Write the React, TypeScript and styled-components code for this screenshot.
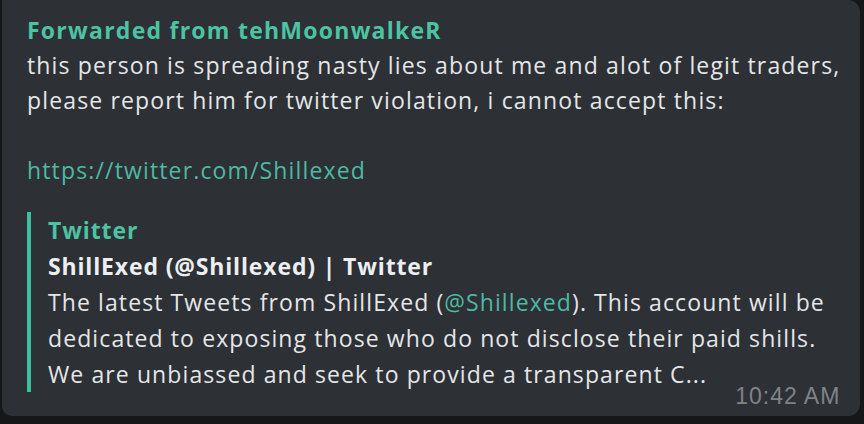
import React from 'react';
import styled, { createGlobalStyle } from 'styled-components';

const GlobalStyle = createGlobalStyle`
  html, body {
    margin: 0;
    padding: 0;
    background: #161719;
  }
  body {
    font-family: 'Open Sans', 'Noto Sans', sans-serif;
  }
`;

const Page = styled.div`
  width: 864px;
  height: 424px;
  box-sizing: border-box;
  padding: 0 6px 8px 2px;
  display: flex;
`;

const Bubble = styled.div`
  flex: 1;
  box-sizing: border-box;
  background: #2d3035;
  border-radius: 0 12px 12px 10px;
  padding: 13px 20px 0 25px;
  color: #e4e6e8;
  font-size: 23px;
  letter-spacing: 1.15px;
  line-height: 35px;
  white-space: nowrap;
`;

const Header = styled.div`
  color: #4cc3a2;
  font-weight: 700;
  letter-spacing: 1.25px;
`;

const Text = styled.div`
  white-space: pre;
`;

const Link = styled.span`
  color: #4db9a3;
`;

const Footer = styled.div`
  display: grid;
  margin-top: 24px;
`;

const Preview = styled.div`
  grid-area: 1 / 1;
  border-left: 4px solid #3dbf9e;
  padding-left: 17px;
  line-height: 36px;
  letter-spacing: 1.1px;
`;

const SiteName = styled.div`
  color: #4cc3a2;
  font-weight: 700;
  letter-spacing: 0.9px;
`;

const Title = styled.div`
  font-weight: 700;
  letter-spacing: 0.85px;
  color: #eceef0;
`;

const Time = styled.div`
  grid-area: 1 / 1;
  justify-self: end;
  align-self: end;
  margin: 0 0 -20px 0;
  font-family: 'Liberation Sans', Arial, sans-serif;
  font-size: 23px;
  letter-spacing: 1px;
  line-height: 32px;
  color: #7f8388;
`;

export default function App() {
  return (
    <>
      <GlobalStyle />
      <Page>
        <Bubble>
          <Header>Forwarded from tehMoonwalkeR</Header>
          <Text>
            {'this person is spreading nasty lies about me and alot of legit traders,\nplease report him for twitter violation, i cannot accept this:\n\n'}
            <Link>https://twitter.com/Shillexed</Link>
          </Text>
          <Footer>
            <Preview>
              <SiteName>Twitter</SiteName>
              <Title>ShillExed (@Shillexed) | Twitter</Title>
              <div>
                The latest Tweets from ShillExed (<Link>@Shillexed</Link>). This account will be
                <br />
                dedicated to exposing those who do not disclose their paid shills.
                <br />
                We are unbiassed and seek to provide a transparent C...
              </div>
            </Preview>
            <Time>10:42 AM</Time>
          </Footer>
        </Bubble>
      </Page>
    </>
  );
}
